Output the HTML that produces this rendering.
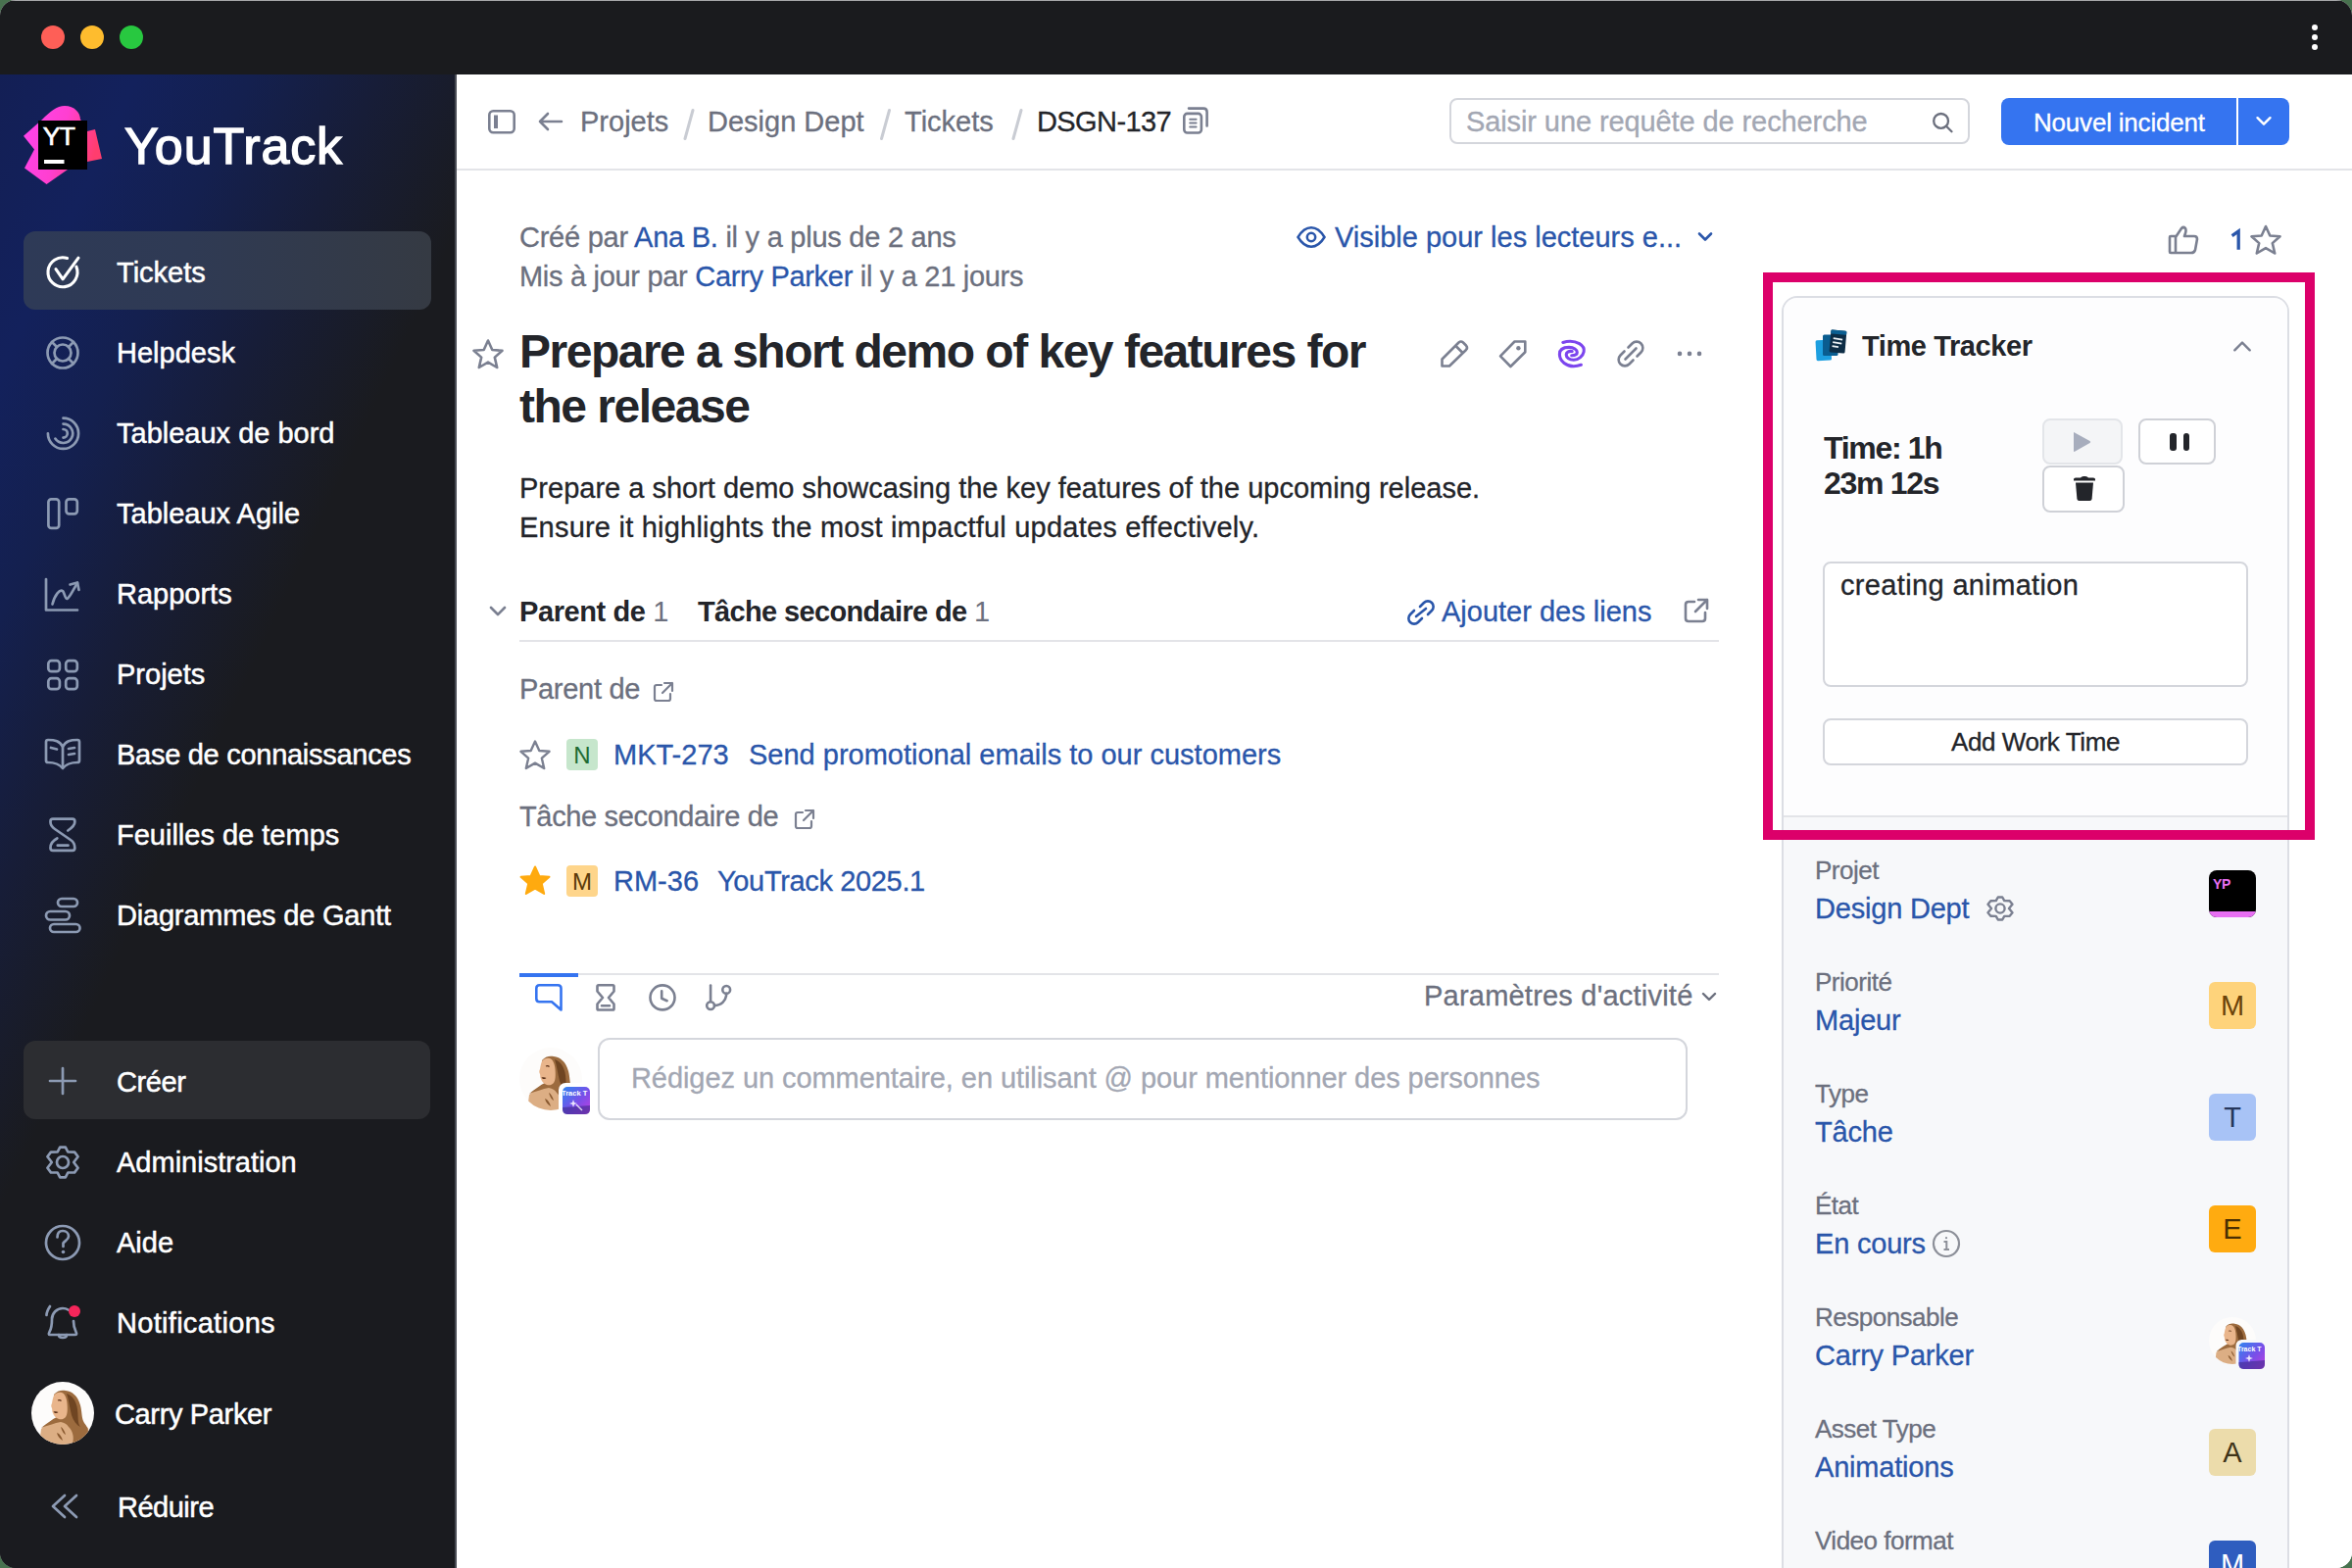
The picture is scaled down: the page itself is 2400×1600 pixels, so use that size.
<!DOCTYPE html>
<html><head><meta charset="utf-8">
<style>
*{box-sizing:border-box;margin:0;padding:0}
html,body{width:2400px;height:1600px;overflow:hidden;background:#48724f}
body{font-family:"Liberation Sans",sans-serif;position:relative}
.win{position:absolute;left:0;top:0;width:2400px;height:1600px;border-radius:16px;overflow:hidden;background:#fff}
.tb{position:absolute;left:0;top:0;width:2400px;height:76px;background:#1a1b1e;border-top:1.5px solid #a6a7a9}
.tl{position:absolute;top:26px;width:24px;height:24px;border-radius:50%}
.kd{position:absolute;left:2358.8px;width:6.4px;height:6.4px;border-radius:50%;background:#fff}
.side{position:absolute;left:0;top:76px;width:464px;height:1524px;background:#1a1b1e;overflow:hidden}
.side .grad{position:absolute;left:0;top:0;width:464px;height:1524px;background:linear-gradient(115deg,#131f55 0%,#13215c 12%,#14204f 22%,#171d38 33%,#1a1b1f 46%)}
.sborder{position:absolute;left:464px;top:76px;width:2px;height:1524px;background:#4a4d55}
.t{position:absolute;white-space:nowrap;line-height:40px;font-size:29px;-webkit-text-stroke-width:0.3px}
.si{color:#fff;left:119px;-webkit-text-stroke:0.5px #fff}
.ic{position:absolute}
.main{position:absolute;left:466px;top:76px;width:1934px;height:1524px;background:#fff}
.gray{color:#6c707e}
.blue{color:#2a56aa}
.dark{color:#23252a}
</style></head><body>
<svg width="0" height="0" style="position:absolute">
  <defs>
    <symbol id="avatar" viewBox="0 0 64 64">
      <clipPath id="avclip"><circle cx="32" cy="32" r="32"/></clipPath>
      <g clip-path="url(#avclip)">
        <rect width="64" height="64" fill="#fdfcfb"/>
        <path d="M10,48 C16,43 20,40 24,38 L38,39 C46,41 52,44 58,47 L60,64 L8,64 Z" fill="#dcae84"/>
        <path d="M23,13 C26,9 31,8 35,9 C42,10 47,14 50,24 C52,32 51,37 54,42 C57,46 60,50 56,56 C52,61 46,63 42,63 C44,56 42,50 38,46 C36,43 34,42 30,41 C24,42 16,45 10,47 C16,42 22,38 26,36 L23,13 Z" fill="#9c6b3e"/>
        <path d="M36,12 C42,14 46,20 47,28 C48,36 47,42 50,46 C46,44 43,40 41,34 C39,26 38,18 36,12 Z" fill="#6f4522"/>
        <path d="M23,14 C25,11 28,10.5 31,11 C34,12 36,16 36.5,22 C37,28 37,33 35,36 C33,38.5 30,38.5 28,38 C25,37 23,35 22,32 C21,30 21.5,29 21,27 C20,25 20,24 21,22 C21.5,19 22,16 23,14 Z" fill="#e9b58b"/>
        <path d="M22.5,30.5 C24,30 26,30 27.5,31 C26,32.5 24,32.5 22.5,30.5 Z" fill="#5a3018"/>
        <path d="M27,19 C28,18.5 29.5,18.5 30.5,19.5" stroke="#5a3018" stroke-width="1.2" fill="none"/>
        <path d="M30,46 C32,47 34,50 35,54 C33,53 31,50 30,46 Z M26,52 C29,53 31,56 32,60 C29,58 27,56 26,52 Z" fill="#8a5a30"/>
      </g>
    </symbol>
    <linearGradient id="ytbadge" x1="0" y1="0" x2="1" y2="1"><stop offset="0" stop-color="#2e86f0"/><stop offset="0.55" stop-color="#7a4ee8"/><stop offset="1" stop-color="#c03fe0"/></linearGradient>
  </defs>
</svg>
<div class="win">
  <div class="tb"></div>
  <div class="tl" style="left:42px;background:#fe5f57"></div>
  <div class="tl" style="left:82px;background:#febc2e"></div>
  <div class="tl" style="left:122px;background:#28c840"></div>
  <div class="kd" style="top:24.9px"></div>
  <div class="kd" style="top:34.9px"></div>
  <div class="kd" style="top:44.9px"></div>

  <div class="side"><div class="grad"></div></div>
  <div class="sborder"></div>

  <!-- SIDEBAR CONTENT -->
    <!-- logo -->
  <svg class="ic" style="left:0;top:76px" width="464" height="140" viewBox="0 76 464 140">
    <defs><linearGradient id="lg1" x1="0" y1="0" x2="1" y2="0.3"><stop offset="0" stop-color="#ff45f0"/><stop offset="0.55" stop-color="#ff3fd0"/><stop offset="1" stop-color="#ff3d6e"/></linearGradient></defs>
    <path d="M24,138.7 L43,122 C51,114 58,108 66,108 C76,108 82,115 82,122 L89,128 L89,134 L97,132 L104,162 L89,165 L69,173 L47.5,188 L25,171.5 L35,152.4 Z" fill="url(#lg1)"/>
    <rect x="39" y="123" width="50" height="50" fill="#000"/>
    <rect x="45" y="163" width="20.5" height="4" fill="#fff"/>
    <text x="43.8" y="148" font-family="Liberation Sans" font-size="26.5" fill="#fff" stroke="#fff" stroke-width="0.7" letter-spacing="-0.6">YT</text>
  </svg>
  <div class="t" style="left:127px;top:119px;font-size:52px;line-height:60px;color:#fff;letter-spacing:0.9px;-webkit-text-stroke:1.4px #fff">YouTrack</div>

  <!-- active item -->
  <div style="position:absolute;left:24px;top:236px;width:416px;height:80px;border-radius:12px;background:linear-gradient(90deg,#2e3a57,#2f3a54 40%,#353a43)"></div>
  <div style="position:absolute;left:24px;top:1062px;width:415px;height:80px;border-radius:12px;background:#2c2d31"></div>

  <svg class="ic" style="left:0;top:0" width="464" height="1600" fill="none" stroke="#8c9ab3" stroke-width="2.7" stroke-linecap="round" stroke-linejoin="round">
    <!-- tickets -->
    <path d="M68.6,263.5 A15,15 0 1 0 77.9,272.2" stroke="#fff" stroke-width="3.1"/>
    <path d="M57,274.6 L64.1,284.8 L80,263.2" stroke="#fff" stroke-width="3.1"/>
    <!-- helpdesk -->
    <circle cx="64" cy="360" r="15.5"/>
    <circle cx="64" cy="360" r="8.5"/>
    <path d="M53,349 L58,354 M75,349 L70,354 M53,371 L58,366 M75,371 L70,366"/>
    <!-- dashboards -->
    <path d="M64.5,426.7 A15.6,15.6 0 1 1 48.9,442.3"/>
    <path d="M64.5,432.6 A9.7,9.7 0 1 1 56.4,447.6"/>
    <path d="M64.5,438 A4.3,4.3 0 0 1 64.5,446.6"/>
    <!-- agile -->
    <rect x="49.4" y="509.3" width="10.8" height="29.6" rx="3"/>
    <rect x="67.5" y="509.3" width="11.3" height="15" rx="3"/>
    <!-- reports -->
    <path d="M47,591 L47,622.5 L79,622.5"/>
    <path d="M53.5,616.5 C56,607 61,601 64,603 C66,605 66,611 68.5,611 C71,610 75,601 79,595"/>
    <path d="M71.5,596.5 L79,594.5 L80.5,602"/>
    <!-- projects -->
    <rect x="49.3" y="674.2" width="11.6" height="11" rx="3.3"/>
    <rect x="67.2" y="674.2" width="11.6" height="11" rx="3.3"/>
    <rect x="49.3" y="692.2" width="11.6" height="11" rx="3.3"/>
    <rect x="67.2" y="692.2" width="11.6" height="11" rx="3.3"/>
    <!-- knowledge base -->
    <path d="M64,784 C60,779 55,778 49,778 Q47,778 47,776 L47,757 Q47,755 49,755 C56,755 61,756 64,762 C67,756 72,755 79,755 Q81,755 81,757 L81,776 Q81,778 79,778 C73,778 68,779 64,784 Z"/>
    <path d="M64,762 L64,783"/>
    <path d="M52,763 L58,764.5 M70,764 L76,763 M70,770 L76,769"/>
    <!-- timesheets -->
    <path d="M69.3,847.5 C73,845 76.3,842.5 76.3,839 L76.3,838 Q76.3,835.6 74,835.6 L54,835.6 Q51.5,835.6 51.5,838 L51.5,839 C51.5,842 53,844 56,846 L72,857 C75,859 76.3,861.5 76.3,865 L76.3,865.5 Q76.3,867.8 74,867.8 L54,867.8 Q51.5,867.8 51.5,865.5 L51.5,865 C51.5,860.5 54.5,857.5 58.3,855.5"/>
    <path d="M58.8,862.7 L69.5,862.7"/>
    <!-- gantt -->
    <rect x="59" y="917" width="20" height="8" rx="4"/>
    <rect x="47" y="930" width="24" height="8.5" rx="4.25"/>
    <rect x="51" y="943" width="30.5" height="8" rx="4"/>
    <!-- create -->
    <path d="M64,1090 L64,1116 M51,1103 L77,1103"/>
    <!-- admin gear -->
    <path d="M61.20,1170.59 L66.80,1170.59 L69.30,1175.51 L76.10,1175.62 L79.60,1180.22 L75.20,1186.00 L79.60,1191.78 L76.10,1196.38 L69.30,1196.49 L66.80,1201.41 L61.20,1201.41 L58.70,1196.49 L51.90,1196.38 L48.40,1191.78 L52.80,1186.00 L48.40,1180.22 L51.90,1175.62 L58.70,1175.51 Z"/>
    <circle cx="64" cy="1186" r="6"/>
    <!-- help -->
    <circle cx="64" cy="1268" r="17"/>
    <path d="M58.5,1262.5 C58.5,1258 61,1256 64,1256 C67.5,1256 70,1258.5 70,1261.5 C70,1265 66,1266 64.5,1268.5 L64.5,1272"/>
    <circle cx="64.5" cy="1277.5" r="1.8" fill="#8c9ab3" stroke="none"/>
    <!-- bell -->
    <path d="M56,1362 L51,1362 Q49,1362 50.5,1359 C53,1355 53,1352 53,1346 C53,1340 58,1335 64,1335 C66,1335 68,1335.5 69.5,1336.5 M75,1348 C75,1353 76,1356 77.5,1359 Q79,1362 76.5,1362 L56,1362"/>
    <path d="M60,1362 C60,1366 68,1366 68,1362"/>
    <path d="M51,1333 C49,1336 47.5,1339 47.5,1342"/>
    <!-- collapse -->
    <path d="M66,1526 L54,1537 L66,1548 M78,1526 L66,1537 L78,1548"/>
  </svg>
  <div style="position:absolute;left:70px;top:1332px;width:12px;height:12px;border-radius:50%;background:#f5265a"></div>

  <!-- avatar -->
  <svg class="ic" style="left:32px;top:1410px" width="64" height="64"><use href="#avatar" width="64" height="64"/></svg>

  <div class="t si" style="top:258px">Tickets</div>
  <div class="t si" style="top:340px">Helpdesk</div>
  <div class="t si" style="top:422px">Tableaux de bord</div>
  <div class="t si" style="top:504px">Tableaux Agile</div>
  <div class="t si" style="top:586px">Rapports</div>
  <div class="t si" style="top:668px">Projets</div>
  <div class="t si" style="top:750px;letter-spacing:-0.28px">Base de connaissances</div>
  <div class="t si" style="top:832px">Feuilles de temps</div>
  <div class="t si" style="top:914px;letter-spacing:-0.2px">Diagrammes de Gantt</div>
  <div class="t si" style="top:1084px;letter-spacing:-0.4px">Créer</div>
  <div class="t si" style="top:1166px">Administration</div>
  <div class="t si" style="top:1248px">Aide</div>
  <div class="t si" style="top:1330px;letter-spacing:0.3px">Notifications</div>
  <div class="t si" style="top:1423px;left:117px;letter-spacing:-0.35px">Carry Parker</div>
  <div class="t si" style="top:1518px;left:120px;letter-spacing:-0.5px">Réduire</div>


  <div class="main"></div>
  <!-- MAIN CONTENT -->
  <!-- RIGHT PANEL -->
  <svg class="ic" style="left:2208px;top:226px" width="130" height="40" fill="none" stroke="#7b8091" stroke-width="2.6" stroke-linejoin="round" stroke-linecap="round">
    <path d="M7,15 L12,15 L12,32 L7,32 Q6,32 6,31 L6,16 Q6,15 7,15 Z M12,16 L18,7 Q20,5 22,7 Q23,9 22,12 L21,15 L31,15 Q34,15 34,18 L32,29 Q31,32 28,32 L12,32"/>
    <path d="M104,5 L108.3,14.5 L118.5,15.3 L110.8,22.1 L113.2,32.5 L104,27.1 L94.8,32.5 L97.2,22.1 L89.5,15.3 L99.7,14.5 Z"/>
  </svg>
  <svg class="ic" style="left:2270px;top:230px" width="24" height="30" viewBox="2270 230 24 30"><path d="M2277.6,240.6 L2284.2,235.9 L2284.2,254.8" fill="none" stroke="#2a56aa" stroke-width="3.3" stroke-linejoin="miter"/></svg>

  <div style="position:absolute;left:1818px;top:302px;width:518px;height:1400px;border:2px solid #dcdee4;border-radius:16px;background:#f7f8fa"></div>
  <div style="position:absolute;left:1820px;top:304px;width:514px;height:529px;border-radius:14px 14px 0 0;background:#fdfdfe"></div>
  <div style="position:absolute;left:1820px;top:832px;width:514px;height:2px;background:#e3e4e8"></div>

  <!-- time tracker icon -->
  <svg class="ic" style="left:1848px;top:333px" width="40" height="40" viewBox="0 0 40 40">
    <rect x="5" y="14" width="15.5" height="21" rx="1.5" fill="#1d9fe0" transform="rotate(-3 12 24)"/>
    <rect x="12" y="8.5" width="15.5" height="21.5" rx="1.5" fill="#0a5d90"/>
    <rect x="19.5" y="4" width="16" height="23" rx="1.5" fill="#0d2d46" transform="rotate(5 27 15)"/>
    <rect x="19.5" y="4" width="16" height="4" rx="1" fill="#0b5f92" transform="rotate(5 27 15)"/>
    <path d="M22.5,12.5 L32,13.2 M22.3,16.5 L31.5,17.2 M22,20.5 L28.5,21" stroke="#e9eef2" stroke-width="1.8" transform="rotate(5 27 15)"/>
  </svg>
  <div class="t dark" style="left:1900px;top:333px;font-weight:700;-webkit-text-stroke-width:0;letter-spacing:-0.4px">Time Tracker</div>
  <svg class="ic" style="left:2274px;top:342px" width="28" height="22" fill="none" stroke="#7b8091" stroke-width="2.4" stroke-linecap="round" stroke-linejoin="round"><path d="M6.3,15.3 L14,7.6 L21.7,15.3"/></svg>

  <div class="t dark" style="left:1861px;top:439px;font-size:32px;line-height:36px;font-weight:700;-webkit-text-stroke-width:0;letter-spacing:-1.3px">Time: 1h<br>23m 12s</div>
  <div style="position:absolute;left:2084px;top:427px;width:82px;height:47px;border:2px solid #e3e5e9;border-radius:8px;background:#f4f5f7"></div>
  <svg class="ic" style="left:2110px;top:436px" width="30" height="30"><path d="M7,5.5 Q6,4.5 6,6 L6,24 Q6,25.5 7.5,24.6 L22.5,16 Q24,15 22.5,14 Z" fill="#a7adbd"/></svg>
  <div style="position:absolute;left:2182px;top:427px;width:79px;height:47px;border:2px solid #cfd1d7;border-radius:8px;background:#fff"></div>
  <div style="position:absolute;left:2214px;top:442px;width:6.5px;height:18px;border-radius:3px;background:#23252a"></div>
  <div style="position:absolute;left:2227.5px;top:442px;width:6.5px;height:18px;border-radius:3px;background:#23252a"></div>
  <div style="position:absolute;left:2084px;top:475px;width:84px;height:48px;border:2px solid #cfd1d7;border-radius:8px;background:#fff"></div>
  <svg class="ic" style="left:2112px;top:484px" width="30" height="30"><path d="M4,5 Q4,3.5 6,3.5 L11,3.5 Q12,2 14,2 L16,2 Q18,2 19,3.5 L24,3.5 Q26,3.5 26,5 L26,6.5 L4,6.5 Z" fill="#23252a"/><path d="M6,8.5 L24,8.5 L22.6,25 Q22.4,27 20.4,27 L9.6,27 Q7.6,27 7.4,25 Z" fill="#23252a"/></svg>

  <div style="position:absolute;left:1860px;top:573px;width:434px;height:128px;border:2px solid #d4d6dc;border-radius:8px;background:#fff"></div>
  <div class="t dark" style="left:1878px;top:577px;letter-spacing:0.35px">creating animation</div>
  <div style="position:absolute;left:1860px;top:733px;width:434px;height:48px;border:2px solid #d4d6dc;border-radius:8px;background:#fff"></div>
  <div class="t dark" style="left:1860px;top:737px;width:434px;text-align:center;font-size:26px;letter-spacing:-0.4px">Add Work Time</div>

  <!-- pink highlight -->
  <div style="position:absolute;left:1799px;top:278px;width:563px;height:579px;border:10px solid #dc006a"></div>

  <!-- fields -->
  <div class="t gray" style="left:1852px;top:868px;font-size:26px;letter-spacing:-0.5px">Projet</div>
  <div class="t blue" style="left:1852px;top:907px;letter-spacing:-0.2px">Design Dept</div>
  <svg class="ic" style="left:2024px;top:910px" width="34" height="34" viewBox="2024 910 34 34" fill="none" stroke="#7b8091" stroke-width="2.4" stroke-linejoin="round"><path d="M2038.76,915.48 L2043.24,915.48 L2045.24,919.16 L2050.68,919.24 L2053.48,922.68 L2049.96,927.00 L2053.48,931.32 L2050.68,934.76 L2045.24,934.84 L2043.24,938.52 L2038.76,938.52 L2036.76,934.84 L2031.32,934.76 L2028.52,931.32 L2032.04,927.00 L2028.52,922.68 L2031.32,919.24 L2036.76,919.16 Z"/><circle cx="2041" cy="927" r="4.6"/></svg>
  <div style="position:absolute;left:2254px;top:888px;width:48px;height:48px;border-radius:8px;background:#000;overflow:hidden"><div style="position:absolute;left:0;bottom:0;width:48px;height:6px;background:#e76ff2"></div><div style="position:absolute;left:4px;top:6px;font-size:14px;line-height:16px;font-weight:700;-webkit-text-stroke-width:0;color:#e76ff2;letter-spacing:-0.3px">YP</div></div>

  <div class="t gray" style="left:1852px;top:982px;font-size:26px;letter-spacing:-0.5px">Priorité</div>
  <div class="t blue" style="left:1852px;top:1021px;letter-spacing:-0.2px">Majeur</div>
  <div style="position:absolute;left:2254px;top:1002px;width:48px;height:48px;border-radius:6px;background:#fed37b;color:#6b4309;font-size:29px;line-height:48px;text-align:center">M</div>

  <div class="t gray" style="left:1852px;top:1096px;font-size:26px;letter-spacing:-0.5px">Type</div>
  <div class="t blue" style="left:1852px;top:1135px;letter-spacing:-0.2px">Tâche</div>
  <div style="position:absolute;left:2254px;top:1116px;width:48px;height:48px;border-radius:6px;background:#a8c3f6;color:#26375c;font-size:29px;line-height:48px;text-align:center">T</div>

  <div class="t gray" style="left:1852px;top:1210px;font-size:26px;letter-spacing:-0.5px">État</div>
  <div class="t blue" style="left:1852px;top:1249px;letter-spacing:-0.2px">En cours</div>
  <svg class="ic" style="left:1970px;top:1253px" width="32" height="32" fill="none" stroke="#8d9099" stroke-width="2.2"><circle cx="16" cy="16" r="13"/><circle cx="16" cy="10.2" r="1.1" fill="#8d9099" stroke="none"/><path d="M13.5,14 L16.3,14 L16.3,22 M13.5,22 L19,22" stroke-width="2"/></svg>
  <div style="position:absolute;left:2254px;top:1230px;width:48px;height:48px;border-radius:6px;background:#ffab10;color:#4b2f03;font-size:29px;line-height:48px;text-align:center">E</div>

  <div class="t gray" style="left:1852px;top:1324px;font-size:26px;letter-spacing:-0.5px">Responsable</div>
  <div class="t blue" style="left:1852px;top:1363px;letter-spacing:-0.2px">Carry Parker</div>
  <svg class="ic" style="left:2250px;top:1340px" width="66" height="62" viewBox="2250 1340 66 62">
    <use href="#avatar" x="2254" y="1344" width="48" height="48"/>
    <rect x="2281.5" y="1367" width="32" height="32" rx="6" fill="#f7f8fa"/>
    <rect x="2284.5" y="1370" width="26.5" height="27" rx="5" fill="url(#ytbadge)"/>
    <path d="M2284.5,1390 L2311,1388 L2311,1392 Q2311,1397 2306,1397 L2289.5,1397 Q2284.5,1397 2284.5,1392 Z" fill="#3b2a8a" opacity="0.6"/>
    <text x="2283" y="1379" font-family="Liberation Sans" font-size="7" font-weight="700" fill="#fff">Track T</text>
    <path d="M2295,1382 L2296,1385 L2299,1386 L2296,1387 L2295,1390 L2294,1387 L2291,1386 L2294,1385 Z" fill="#fff" opacity="0.85"/>
  </svg>

  <div class="t gray" style="left:1852px;top:1438px;font-size:26px;letter-spacing:-0.5px">Asset Type</div>
  <div class="t blue" style="left:1852px;top:1477px;letter-spacing:-0.2px">Animations</div>
  <div style="position:absolute;left:2254px;top:1458px;width:48px;height:48px;border-radius:6px;background:#ecdcab;color:#3f3419;font-size:29px;line-height:48px;text-align:center">A</div>

  <div class="t gray" style="left:1852px;top:1552px;font-size:26px;letter-spacing:-0.5px">Video format</div>
  <div style="position:absolute;left:2254px;top:1572px;width:48px;height:48px;border-radius:6px;background:#2f5dbf;color:#fff;font-size:29px;line-height:48px;text-align:center">M</div>

    <!-- HEADER -->
  <div style="position:absolute;left:466px;top:172px;width:1934px;height:2px;background:#e3e4e8"></div>
  <svg class="ic" style="left:466px;top:76px" width="800" height="96" fill="none" stroke="#7b8091" stroke-width="2.6" stroke-linecap="round" stroke-linejoin="round">
    <rect x="33.3" y="37.3" width="25.4" height="22" rx="4"/>
    <rect x="38" y="41.5" width="4" height="13.5" fill="#7b8091" stroke="none"/>
    <path d="M85,48 L107,48 M93,40 L85,48 L93,56"/>
    </svg>
  <svg class="ic" style="left:680px;top:100px" width="570" height="50" viewBox="680 100 570 50" fill="none" stroke-linecap="round" stroke-linejoin="round">
    <path d="M707,112.5 L699,141.5 M907.5,112.5 L899.5,141.5 M1042,112.5 L1034,141.5" stroke="#c9ccd3" stroke-width="3"/>
    <g stroke="#7b8091" stroke-width="2.6">
      <rect x="1208.3" y="115.9" width="17.6" height="19.6" rx="3.2"/>
      <path d="M1213,110.6 L1228,110.6 Q1231.6,110.6 1231.6,114.2 L1231.6,128.5"/>
      <path d="M1214.2,121.7 L1220.6,121.7 M1214.2,125.6 L1220.6,125.6 M1214.2,129.5 L1220.6,129.5" stroke-width="2"/>
    </g>
  </svg>
  <div class="t gray" style="left:592px;top:104px">Projets</div>
    <div class="t gray" style="left:722px;top:104px">Design Dept</div>
    <div class="t gray" style="left:923px;top:104px">Tickets</div>
    <div class="t dark" style="left:1058px;top:104px;letter-spacing:-0.6px">DSGN-137</div>

  <div style="position:absolute;left:1479px;top:100px;width:531px;height:47px;border:2px solid #d4d6dc;border-radius:8px"></div>
  <div class="t" style="left:1496px;top:104px;color:#a3a7b3;letter-spacing:-0.1px">Saisir une requête de recherche</div>
  <svg class="ic" style="left:1966px;top:110px" width="30" height="30" viewBox="1966 110 30 30" fill="none" stroke="#6c707e" stroke-width="2.3" stroke-linecap="round"><circle cx="1980.6" cy="123.4" r="7.4"/><path d="M1986,128.8 L1991.5,134.2"/></svg>

  <div style="position:absolute;left:2042px;top:100px;width:294px;height:48px;border-radius:8px;background:#3574f0"></div>
  <div style="position:absolute;left:2282px;top:100px;width:2px;height:48px;background:#fff"></div>
  <div class="t" style="left:2075px;top:105px;color:#fff;font-size:26px;letter-spacing:-0.2px">Nouvel incident</div>
  <svg class="ic" style="left:2296px;top:112px" width="28" height="22" viewBox="2296 112 28 22" fill="none" stroke="#fff" stroke-width="2.4" stroke-linecap="round" stroke-linejoin="round"><path d="M2303.5,120.2 L2310,126.7 L2316.5,120.2"/></svg>

  <!-- META -->
  <div class="t gray" style="left:530px;top:222px;letter-spacing:-0.25px">Créé par <span class="blue">Ana B.</span> il y a plus de 2 ans</div>
  <div class="t gray" style="left:530px;top:262px;letter-spacing:-0.3px">Mis à jour par <span class="blue">Carry Parker</span> il y a 21 jours</div>
  <svg class="ic" style="left:1318px;top:226px" width="40" height="32" viewBox="1318 226 40 32" fill="none" stroke="#2a56aa" stroke-width="2.5"><path d="M1324.5,242 C1329,234.5 1334,232.3 1338,232.3 C1342,232.3 1347,234.5 1351.5,242 C1347,249.5 1342,251.7 1338,251.7 C1334,251.7 1329,249.5 1324.5,242 Z"/><circle cx="1338" cy="242" r="4.2"/></svg>
  <div class="t blue" style="left:1362px;top:222px;letter-spacing:0px">Visible pour les lecteurs e...</div>
  <svg class="ic" style="left:1728px;top:232px" width="24" height="20" fill="none" stroke="#2a56aa" stroke-width="2.6" stroke-linecap="round" stroke-linejoin="round"><path d="M6,6.5 L12,12.5 L18,6.5"/></svg>

  <!-- TITLE -->
  <svg class="ic" style="left:478px;top:343px" width="40" height="38" fill="none" stroke="#7b8091" stroke-width="2.6" stroke-linejoin="round"><path d="M20,4.5 L24.3,14 L34.5,14.8 L26.8,21.6 L29.2,32 L20,26.6 L10.8,32 L13.2,21.6 L5.5,14.8 L15.7,14 Z"/></svg>
  <div class="t dark" style="left:530px;top:331px;font-size:48px;line-height:56px;font-weight:700;-webkit-text-stroke-width:0;letter-spacing:-1.5px">Prepare a short demo of key features for<br>the release</div>

  <svg class="ic" style="left:1460px;top:335px" width="300" height="50" fill="none" stroke="#7b8091" stroke-width="2.6" stroke-linecap="round" stroke-linejoin="round">
    <path d="M11.5,38.5 L11.5,31.5 L28.5,14.5 Q30.8,12.5 33,14.5 L36,17.5 Q38,19.8 36,22 L19,38.5 Z M25.5,18 L32,24.5"/>
    <path d="M71,28.4 L85.5,13.5 L96.3,13.5 L96.3,24.3 L81.4,39 Z"/>
    <circle cx="89.4" cy="20.3" r="2.2" fill="#7b8091" stroke="none"/>
    <path d="M201.5,19.5 L205.5,15.5 A6.3,6.3 0 0 1 214.5,24.5 L210.5,28.5 M206.5,32.5 L202.5,36.5 A6.3,6.3 0 0 1 193.5,27.5 L197.5,23.5 M198.5,31.5 L209.5,20.5"/>
    <circle cx="254" cy="25.9" r="2.3" fill="#7b8091" stroke="none"/>
    <circle cx="264" cy="25.9" r="2.3" fill="#7b8091" stroke="none"/>
    <circle cx="274" cy="25.9" r="2.3" fill="#7b8091" stroke="none"/>
    <g stroke="#7c45ee" stroke-width="3.1" transform="translate(124,7)">
      <path d="M10.8,7.4 C16,5.8 23,6 27.6,8.7 C31.5,11 32.8,14 32.1,17 C31.3,21 27,25.3 21.8,25.3 C17.5,25.3 14.2,23 14.2,20 C14.2,17.3 16.5,16.1 20.2,16.5"/>
      <path d="M29.4,30.3 C26,31.5 24,31.7 21.8,31.7 C15,31.7 7.4,27 7.4,19.5 C7.4,15 11,12.4 17,12.4 C22,12.4 25.3,15 25.3,17.5 C25.3,19.5 23.5,20.7 19.7,20.7"/>
    </g>
  </svg>

  <!-- DESCRIPTION -->
  <div class="t dark" style="left:530px;top:478px;line-height:40px">Prepare a short demo showcasing the key features of the upcoming release.<br><span style="letter-spacing:0.22px">Ensure it highlights the most impactful updates effectively.</span></div>

  <!-- LINKS -->
  <svg class="ic" style="left:496px;top:612px" width="24" height="24" fill="none" stroke="#7b8091" stroke-width="2.6" stroke-linecap="round" stroke-linejoin="round"><path d="M5,8 L12,15 L19,8"/></svg>
  <div class="t dark" style="left:530px;top:604px;font-weight:700;-webkit-text-stroke-width:0;letter-spacing:-0.4px">Parent de <span class="gray" style="font-weight:400">1</span></div>
  <div class="t dark" style="left:712px;top:604px;font-weight:700;-webkit-text-stroke-width:0;letter-spacing:-0.65px">Tâche secondaire de <span class="gray" style="font-weight:400">1</span></div>
  <svg class="ic" style="left:1432px;top:608px" width="36" height="32" fill="none" stroke="#2a56aa" stroke-width="2.6" stroke-linecap="round">
    <path d="M17,11 L21,7 A5.5,5.5 0 0 1 29,15 L25,19 M19,23 L15,27 A5.5,5.5 0 0 1 7,19 L11,15 M13,21 L23,13"/>
  </svg>
  <div class="t blue" style="left:1471px;top:604px">Ajouter des liens</div>
  <svg class="ic" style="left:1716px;top:608px" width="30" height="30" fill="none" stroke="#7b8091" stroke-width="2.6" stroke-linecap="round" stroke-linejoin="round"><path d="M13,6 L7,6 Q4,6 4,9 L4,23 Q4,26 7,26 L21,26 Q24,26 24,23 L24,17 M17,4 L26,4 L26,13 M26,4 L14,16"/></svg>
  <div style="position:absolute;left:530px;top:653px;width:1224px;height:2px;background:#e3e4e8"></div>

  <div class="t gray" style="left:530px;top:683px;letter-spacing:-0.3px">Parent de</div>
  <svg class="ic" style="left:664px;top:694px" width="28" height="26" fill="none" stroke="#7b8091" stroke-width="2.2" stroke-linecap="round" stroke-linejoin="round"><path d="M11,5 L6,5 Q4,5 4,7 L4,19 Q4,21 6,21 L18,21 Q20,21 20,19 L20,14 M14,3 L22,3 L22,11 M22,3 L12,13"/></svg>
  <svg class="ic" style="left:526px;top:752px" width="40" height="38" fill="none" stroke="#7b8091" stroke-width="2.4" stroke-linejoin="round"><path d="M20,4.5 L24.3,14 L34.5,14.8 L26.8,21.6 L29.2,32 L20,26.6 L10.8,32 L13.2,21.6 L5.5,14.8 L15.7,14 Z"/></svg>
  <div style="position:absolute;left:578px;top:754px;width:32px;height:32px;border-radius:4px;background:#c6e6cc;color:#1e6b33;font-size:24px;line-height:33px;text-align:center">N</div>
  <div class="t blue" style="left:626px;top:750px">MKT-273</div>
  <div class="t blue" style="left:764px;top:750px;letter-spacing:0px">Send promotional emails to our customers</div>

  <div class="t gray" style="left:530px;top:813px;letter-spacing:-0.35px">Tâche secondaire de</div>
  <svg class="ic" style="left:808px;top:824px" width="28" height="26" fill="none" stroke="#7b8091" stroke-width="2.2" stroke-linecap="round" stroke-linejoin="round"><path d="M11,5 L6,5 Q4,5 4,7 L4,19 Q4,21 6,21 L18,21 Q20,21 20,19 L20,14 M14,3 L22,3 L22,11 M22,3 L12,13"/></svg>
  <svg class="ic" style="left:526px;top:880px" width="40" height="38"><path d="M20,4.5 L24.3,14 L34.5,14.8 L26.8,21.6 L29.2,32 L20,26.6 L10.8,32 L13.2,21.6 L5.5,14.8 L15.7,14 Z" fill="#ffaa0f" stroke="#ffaa0f" stroke-width="2" stroke-linejoin="round"/></svg>
  <div style="position:absolute;left:578px;top:883px;width:32px;height:32px;border-radius:4px;background:#fed58b;color:#5a3b09;font-size:24px;line-height:33px;text-align:center">M</div>
  <div class="t blue" style="left:626px;top:879px">RM-36</div>
  <div class="t blue" style="left:732px;top:879px;letter-spacing:-0.35px">YouTrack 2025.1</div>

  <!-- ACTIVITY -->
  <div style="position:absolute;left:530px;top:993px;width:1224px;height:2px;background:#e3e4e8"></div>
  <div style="position:absolute;left:530px;top:993px;width:60px;height:4px;background:#3574f0"></div>
  <svg class="ic" style="left:530px;top:985px" width="240" height="60" viewBox="530 985 240 60" fill="none" stroke="#7b8091" stroke-width="2.6" stroke-linecap="round" stroke-linejoin="round">
    <path d="M550.5,1005.3 L569.2,1005.3 Q572.5,1005.3 572.5,1008.6 L572.5,1030.5 L563,1022.3 L550.5,1022.3 Q547.3,1022.3 547.3,1019 L547.3,1008.6 Q547.3,1005.3 550.5,1005.3 Z" stroke="#3574f0"/>
    <path d="M610.8,1005.3 L625.2,1005.3 Q626.5,1005.3 626.5,1006.6 L626.5,1011.5 L621,1018 L626.5,1024.5 L626.5,1029.2 Q626.5,1030.5 625.2,1030.5 L610.8,1030.5 Q609.5,1030.5 609.5,1029.2 L609.5,1024.5 L615,1018 L609.5,1011.5 L609.5,1006.6 Q609.5,1005.3 610.8,1005.3 Z M614,1026.3 L622,1026.3"/>
    <circle cx="676" cy="1017.9" r="12.5"/>
    <path d="M675.2,1011.4 L675.2,1018.8 L680.6,1021.2"/>
    <path d="M725.1,1005.5 L725.1,1022"/>
    <circle cx="725.1" cy="1026.1" r="3.9"/>
    <circle cx="741.2" cy="1009.9" r="3.9"/>
    <path d="M741.2,1013.8 C741.2,1021 736,1026.1 729,1026.1"/>
  </svg>
  <div class="t gray" style="left:1453px;top:996px;letter-spacing:0.22px">Paramètres d'activité</div>
  <svg class="ic" style="left:1732px;top:1008px" width="24" height="20" fill="none" stroke="#6c707e" stroke-width="2.4" stroke-linecap="round" stroke-linejoin="round"><path d="M6,6 L12,12 L18,6"/></svg>

  <svg class="ic" style="left:528px;top:1068px" width="80" height="76" viewBox="528 1068 80 76">
    <use href="#avatar" x="530" y="1069" width="64" height="64"/>
    <rect x="570" y="1105" width="36" height="36" rx="7" fill="#fff"/>
    <rect x="574" y="1109" width="28" height="28" rx="5" fill="url(#ytbadge)"/>
    <path d="M574,1130 L602,1128 L602,1132 Q602,1137 597,1137 L579,1137 Q574,1137 574,1132 Z" fill="#3b2a8a" opacity="0.6"/>
    <text x="573" y="1118" font-family="Liberation Sans" font-size="7.5" font-weight="700" fill="#fff">Track T</text>
    <path d="M585,1122 L586,1125 L589,1126 L586,1127 L585,1130 L584,1127 L581,1126 L584,1125 Z" fill="#fff" opacity="0.85"/>
    <path d="M588,1127 L594,1133" stroke="#fff" stroke-width="1.4" opacity="0.8"/>
  </svg>
  <div style="position:absolute;left:610px;top:1059px;width:1112px;height:84px;border:2px solid #d4d6dc;border-radius:12px"></div>
  <div class="t" style="left:644px;top:1080px;color:#a3a7b3;letter-spacing:-0.07px">Rédigez un commentaire, en utilisant @ pour mentionner des personnes</div>

</div>
</body></html>
